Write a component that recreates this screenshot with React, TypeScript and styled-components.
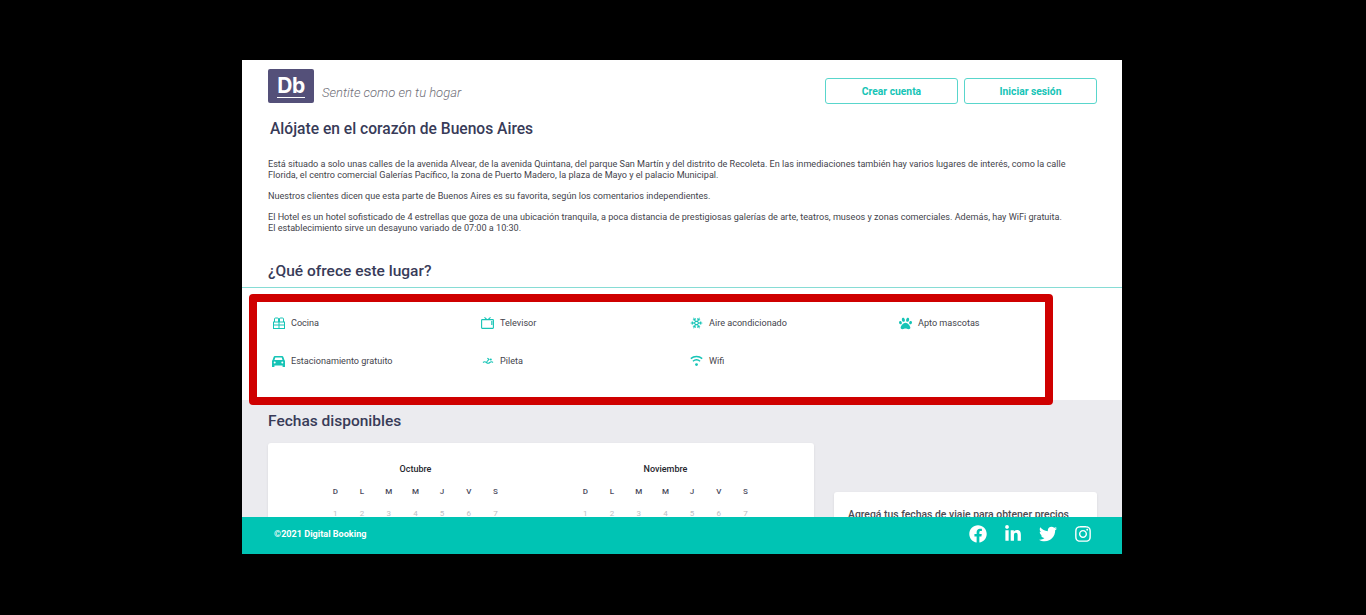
import React from "react";
import styled, { createGlobalStyle } from "styled-components";
import { FaFacebook, FaInstagram, FaLinkedinIn, FaPaw, FaTwitter } from "react-icons/fa";
import { Snowflake } from "lucide-react";

const GlobalStyle = createGlobalStyle`
  html, body {
    margin: 0;
    height: 100%;
    background: #000;
    overflow: hidden;
  }
  body {
    font-family: Roboto, "Liberation Sans", sans-serif;
  }
`;

const Page = styled.div`
  display: flex;
  justify-content: center;
  padding: 60px 2px 0 0;
`;

const Frame = styled.div`
  position: relative;
  display: flex;
  flex-direction: column;
  width: 880px;
  height: 494px;
  background: #fff;
  overflow: hidden;
`;

const Scroller = styled.div`
  flex: 1;
  min-height: 0;
  overflow: hidden;
`;

const Header = styled.header`
  display: flex;
  justify-content: space-between;
  padding: 9px 25px 0 26px;
  height: 34px;
`;

const Brand = styled.div`
  display: flex;
  align-items: center;
  gap: 8px;
`;

const Logo = styled.div`
  display: flex;
  align-items: center;
  justify-content: center;
  width: 46px;
  height: 34px;
  border-radius: 2px;
  background: #545079;
  color: #fff;
  font-family: Inter, Roboto, sans-serif;
  font-size: 21px;
  font-weight: 700;
  line-height: 20px;
  letter-spacing: -0.5px;
`;

const LogoText = styled.span`
  border-bottom: 1.5px solid #fff;
  padding-bottom: 1px;
  margin-top: 1px;
`;

const Tagline = styled.span`
  margin-top: 12px;
  color: #6f6f78;
  font-size: 13px;
  font-style: italic;
  font-weight: 300;
`;

const Actions = styled.div`
  display: flex;
  gap: 6px;
  padding-top: 9px;
`;

const OutlineButton = styled.button`
  width: 133px;
  height: 26px;
  padding: 0;
  background: #fff;
  border: 1px solid #59d6cc;
  border-radius: 3px;
  color: #16c4b6;
  font-family: inherit;
  font-size: 10.3px;
  font-weight: 700;
`;

const Title = styled.h1`
  margin: 17px 0 0 28px;
  color: #383b58;
  font-size: 15.6px;
  font-weight: 500;
  line-height: 19px;
`;

const Description = styled.div`
  margin: 20px 0 0 26px;
  width: 802px;
  color: #44444c;
  font-size: 9.1px;
  line-height: 11px;
`;

const Paragraph = styled.p`
  margin: 0 0 10px;
`;

const SectionTitle = styled.h2`
  margin: 0;
  color: #383b58;
  font-size: 15.5px;
  font-weight: 500;
  line-height: 19px;
`;

const OffersHead = styled.div`
  margin-top: 28px;
  padding: 0 0 6px 26px;
  border-bottom: 1px solid #86dcd5;
`;

const OffersGrid = styled.div`
  display: grid;
  grid-template-columns: repeat(4, 209px);
  grid-auto-rows: 38px;
  height: 112px;
  padding: 16px 0 0 30px;
  box-sizing: border-box;
`;

const Offer = styled.div`
  display: flex;
  align-items: center;
  height: 38px;
  color: #44444c;
  font-size: 9.1px;
`;

const OfferIcon = styled.span`
  display: flex;
  justify-content: center;
  width: 13px;
  margin-right: 6px;
  color: #16c4b6;
  font-size: 13px;
`;

const DatesSection = styled.section`
  padding: 12px 25px 0 26px;
  height: 200px;
  background: #ebebef;
`;

const DatesRow = styled.div`
  display: flex;
  align-items: flex-start;
  gap: 20px;
  margin-top: 12px;
`;

const CalendarCard = styled.div`
  display: flex;
  flex: none;
  width: 546px;
  height: 160px;
  padding: 21px 0 0 54px;
  box-sizing: border-box;
  gap: 63px;
  background: #fff;
  border-radius: 3px;
  box-shadow: 0 1px 3px rgba(0, 0, 0, 0.08);
`;

const Month = styled.div`
  width: 187px;
`;

const MonthName = styled.div`
  text-align: center;
  color: #26262e;
  font-size: 9px;
  font-weight: 500;
  line-height: 11px;
`;

const DayGrid = styled.div`
  display: grid;
  grid-template-columns: repeat(7, 26.7px);
  grid-auto-rows: 22px;
  margin-top: 5px;
`;

const DayCell = styled.div<{ $head?: boolean }>`
  display: flex;
  align-items: center;
  justify-content: center;
  color: ${(p) => (p.$head ? "#4a4a5c" : "#bdbdc2")};
  font-size: 8px;
  font-weight: ${(p) => (p.$head ? 500 : 400)};
`;

const BookingCard = styled.div`
  flex: 1;
  margin-top: 49px;
  padding: 16px 14px;
  height: 90px;
  background: #fff;
  border-radius: 3px;
  box-shadow: 0 1px 3px rgba(0, 0, 0, 0.08);
  color: #4a4a52;
  font-size: 10.4px;
  font-weight: 500;
  line-height: 14px;
  white-space: nowrap;
`;

const Footer = styled.footer`
  position: relative;
  flex: none;
  display: flex;
  align-items: center;
  justify-content: space-between;
  height: 37px;
  box-sizing: border-box;
  padding: 0 30px 3px 32px;
  background: #00c4b4;
  color: #fff;
`;

const Copyright = styled.span`
  font-size: 9.1px;
  font-weight: 700;
`;

const Socials = styled.div`
  display: flex;
  align-items: center;
  gap: 17px;
  font-size: 18px;
`;

const Highlight = styled.div`
  position: absolute;
  left: 7px;
  top: 234px;
  width: 804px;
  height: 111px;
  box-sizing: border-box;
  border: 8px solid #cf0000;
  border-radius: 4px;
  pointer-events: none;
`;

const KitchenIcon = () => (
  <svg width="12" height="12" viewBox="0 0 12 12" fill="none" stroke="currentColor" strokeWidth="1">
    <rect x="0.5" y="5" width="11" height="6.5" />
    <path d="M6 1v10.5M0.5 8h11" />
    <path d="M1.5 5V2a1 1 0 0 1 1-1h2a1 1 0 0 1 1 1v3M6.5 5V2a1 1 0 0 1 1-1h2a1 1 0 0 1 1 1v3" />
  </svg>
);

const TvIcon = () => (
  <svg width="13" height="12" viewBox="0 0 13 12" fill="none" stroke="currentColor" strokeWidth="1.1">
    <rect x="0.6" y="2.6" width="11.8" height="8.8" rx="0.6" />
    <path d="M3.5 0.4l2.5 2.2M9.5 0.4L7 2.6" />
    <path d="M10 5h1.6M10 7h1.6" strokeWidth="1.4" />
  </svg>
);

const CarIcon = () => (
  <svg width="13" height="11" viewBox="0 0 13 11" fill="currentColor">
    <path
      fillRule="evenodd"
      d="M3 0h7c.7 0 1.2.4 1.4 1L12.4 4c.4.3.6.7.6 1.200V11h-2.400V9.600H2.400V11H0V5.200c0-.5.200-.9.600-1.200L1.600 1C1.800.4 2.300 0 3 0zm.3 1.400L2.500 4h8L9.700 1.400H3.300zM2.700 5.600a1 1 0 1 0 0 2 1 1 0 0 0 0-2zm7.600 0a1 1 0 1 0 0 2 1 1 0 0 0 0-2z"
    />
  </svg>
);

const SwimIcon = () => (
  <svg width="12" height="8" viewBox="0 0 12 8" fill="none" stroke="currentColor" strokeWidth="1.1">
    <path d="M1 5.500c1.200-1 2.200-1 3.400 0s2.200 1 3.400 0 2.200-1 3.200 0" />
    <path d="M4.600 5L7 2.400 5.400 1.200" />
    <circle cx="8.800" cy="2.600" r="1" fill="currentColor" stroke="none" />
  </svg>
);

const WifiIcon = () => (
  <svg width="13" height="12" viewBox="0 0 13 12" fill="none" stroke="currentColor" strokeWidth="1.4">
    <path d="M0.8 3.600c3.200-2.800 8.200-2.800 11.400 0" />
    <path d="M2.900 6.200c2.100-1.700 5.100-1.700 7.200 0" />
    <circle cx="6.500" cy="9.600" r="1.400" fill="currentColor" stroke="none" />
  </svg>
);

const offers = [
  { label: "Cocina", icon: <KitchenIcon /> },
  { label: "Televisor", icon: <TvIcon /> },
  { label: "Aire acondicionado", icon: <Snowflake size={14} strokeWidth={1.9} /> },
  { label: "Apto mascotas", icon: <FaPaw /> },
  { label: "Estacionamiento gratuito", icon: <CarIcon /> },
  { label: "Pileta", icon: <SwimIcon /> },
  { label: "Wifi", icon: <WifiIcon /> },
];

const weekDays = ["D", "L", "M", "M", "J", "V", "S"];
const firstDays = [1, 2, 3, 4, 5, 6, 7];

const CalendarMonth: React.FC<{ name: string }> = ({ name }) => (
  <Month>
    <MonthName>{name}</MonthName>
    <DayGrid>
      {weekDays.map((d, i) => (
        <DayCell $head key={i}>
          {d}
        </DayCell>
      ))}
      {firstDays.map((d) => (
        <DayCell key={d}>{d}</DayCell>
      ))}
    </DayGrid>
  </Month>
);

export default function App() {
  return (
    <Page>
      <GlobalStyle />
      <Frame>
        <Scroller>
          <Header>
            <Brand>
              <Logo>
                <LogoText>Db</LogoText>
              </Logo>
              <Tagline>Sentite como en tu hogar</Tagline>
            </Brand>
            <Actions>
              <OutlineButton>Crear cuenta</OutlineButton>
              <OutlineButton>Iniciar sesión</OutlineButton>
            </Actions>
          </Header>
          <Title>Alójate en el corazón de Buenos Aires</Title>
          <Description>
            <Paragraph>
              Está situado a solo unas calles de la avenida Alvear, de la avenida Quintana, del parque San Martín y del
              distrito de Recoleta. En las inmediaciones también hay varios lugares de interés, como la calle Florida, el
              centro comercial Galerías Pacífico, la zona de Puerto Madero, la plaza de Mayo y el palacio Municipal.
            </Paragraph>
            <Paragraph>Nuestros clientes dicen que esta parte de Buenos Aires es su favorita, según los comentarios independientes.</Paragraph>
            <Paragraph>
              El Hotel es un hotel sofisticado de 4 estrellas que goza de una ubicación tranquila, a poca distancia de
              prestigiosas galerías de arte, teatros, museos y zonas comerciales. Además, hay WiFi gratuita. El
              establecimiento sirve un desayuno variado de 07:00 a 10:30.
            </Paragraph>
          </Description>
          <OffersHead>
            <SectionTitle>¿Qué ofrece este lugar?</SectionTitle>
          </OffersHead>
          <OffersGrid>
            {offers.map((o) => (
              <Offer key={o.label}>
                <OfferIcon>{o.icon}</OfferIcon>
                {o.label}
              </Offer>
            ))}
          </OffersGrid>
          <DatesSection>
            <SectionTitle>Fechas disponibles</SectionTitle>
            <DatesRow>
              <CalendarCard>
                <CalendarMonth name="Octubre" />
                <CalendarMonth name="Noviembre" />
              </CalendarCard>
              <BookingCard>Agregá tus fechas de viaje para obtener precios</BookingCard>
            </DatesRow>
          </DatesSection>
        </Scroller>
        <Footer>
          <Copyright>©2021 Digital Booking</Copyright>
          <Socials>
            <FaFacebook />
            <FaLinkedinIn />
            <FaTwitter />
            <FaInstagram />
          </Socials>
        </Footer>
        <Highlight />
      </Frame>
    </Page>
  );
}
